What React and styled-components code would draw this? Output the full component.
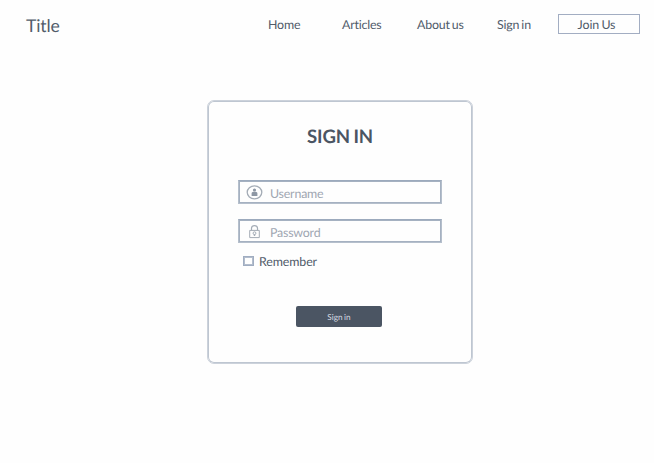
import React from "react";
import styled, { createGlobalStyle } from "styled-components";

const GlobalStyle = createGlobalStyle`
  * { box-sizing: border-box; }
  body {
    margin: 0;
    background: #fefefe;
    color: #515c6a;
    font-family: Lato, "Liberation Sans", sans-serif;
    text-rendering: geometricPrecision;
  }
`;

const Page = styled.div`
  min-height: 463px;
  display: flex;
  flex-direction: column;
`;

const Header = styled.header`
  height: 48px;
  padding: 0 14px 0 26px;
  display: flex;
  justify-content: space-between;
`;

const Brand = styled.div`
  font-size: 17.6px;
  line-height: 22px;
  padding-top: 15px;
  letter-spacing: -0.15px;
`;

const Nav = styled.nav`
  display: grid;
  grid-template-columns: 74px 75px 80px 61px 82px;
  align-items: start;
  padding-top: 14px;
`;

const NavLink = styled.a`
  font-size: 12.4px;
  line-height: 20px;
  padding-top: 1px;
  letter-spacing: -0.2px;
  word-spacing: -0.8px;
  white-space: nowrap;
`;

const JoinButton = styled.button`
  height: 20px;
  padding: 1px 5px 0 0;
  border: 1px solid #a2adc2;
  background: transparent;
  color: inherit;
  font: 12.4px/18px Lato, sans-serif;
  letter-spacing: -0.1px;
  word-spacing: -0.8px;
  text-rendering: inherit;
`;

const Card = styled.form`
  width: 266px;
  height: 264px;
  margin: 52px 0 0 207px;
  padding: 23px 30px 0;
  border: 1px solid #ccd2db;
  box-shadow: inset 0 0 0 1px #bec6d1;
  border-radius: 7px;
  display: flex;
  flex-direction: column;
`;

const Heading = styled.h1`
  margin: 0 0 32px;
  font-size: 18.6px;
  line-height: 24px;
  font-weight: 700;
  text-align: center;
  color: #4b5563;
  letter-spacing: -0.1px;
  word-spacing: -1px;
`;

const Field = styled.label`
  width: 204px;
  height: 24px;
  margin-bottom: ${(p) => p.$gap}px;
  border: 1px solid #b5bfcc;
  border-top-color: #9caabd;
  box-shadow: inset 0 0 0 1px #a5b1c1;
  display: flex;
  align-items: center;
  padding-left: 7px;
`;

const Input = styled.input`
  width: 150px;
  height: 18px;
  margin: 3px 0 0 7px;
  padding: 0;
  border: 0;
  outline: 0;
  background: transparent;
  font: 12.4px/18px Lato, sans-serif;
  letter-spacing: -0.2px;
  text-rendering: inherit;
  &::placeholder { color: #a0a7b2; opacity: 1; }
`;

const Remember = styled.label`
  display: flex;
  align-items: center;
  gap: 5px;
  height: 18px;
  padding-left: 5px;
  font-size: 12.4px;
  line-height: 18px;
  letter-spacing: -0.1px;
`;

const Checkbox = styled.input`
  appearance: none;
  width: 11px;
  height: 10px;
  margin: 0 0 2px;
  border: 1px solid #a0adc1;
  box-shadow: inset 0 0 0 1px #b3bdcd;
`;

const Submit = styled.button`
  width: 86px;
  height: 21px;
  margin: 35px 0 0 58px;
  padding: 1px 0 0;
  border: 0;
  border-radius: 2px;
  background: #4b5563;
  color: #d9dee4;
  font: 8.2px/20px Lato, sans-serif;
  word-spacing: -0.5px;
  text-rendering: inherit;
`;

const UserIcon = () => (
  <svg width="17" height="15" viewBox="0 0 17 15" fill="none">
    <ellipse cx="8.5" cy="7.3" rx="7.3" ry="6.5" stroke="#a4acb6" strokeWidth="1.3" />
    <circle cx="8.5" cy="5" r="1.6" fill="#8d97a4" />
    <path d="M5.6 10.9V8.2Q5.6 7.3 6.6 7.1L7.6 6.7H9.4L10.4 7.1Q11.4 7.3 11.4 8.2V10.9Z" fill="#8d97a4" />
  </svg>
);

const LockIcon = () => (
  <svg width="17" height="15" viewBox="0 0 17 15" fill="none" stroke="#a4acb6">
    <path d="M3.7 6.4H13.3V13.6H3.7Z" />
    <path d="M5.5 6.2V4Q5.7 1.6 8.5 1.6Q11.3 1.6 11.5 4V6.2" strokeWidth="1.2" />
    <circle cx="8.5" cy="9.2" r="1.4" />
    <path d="M8.5 10.4V12" strokeWidth="1.4" />
  </svg>
);

const links = ["Home", "Articles", "About us", "Sign in"];

export default function App() {
  return (
    <Page>
      <GlobalStyle />
      <Header>
        <Brand>Title</Brand>
        <Nav>
          {links.map((label) => (
            <NavLink key={label}>{label}</NavLink>
          ))}
          <JoinButton type="button">Join Us</JoinButton>
        </Nav>
      </Header>
      <Card>
        <Heading>SIGN IN</Heading>
        <Field $gap={15}>
          <UserIcon />
          <Input type="text" placeholder="Username" />
        </Field>
        <Field $gap={10}>
          <LockIcon />
          <Input type="password" placeholder="Password" />
        </Field>
        <Remember>
          <Checkbox type="checkbox" />
          Remember
        </Remember>
        <Submit type="button">Sign in</Submit>
      </Card>
    </Page>
  );
}
